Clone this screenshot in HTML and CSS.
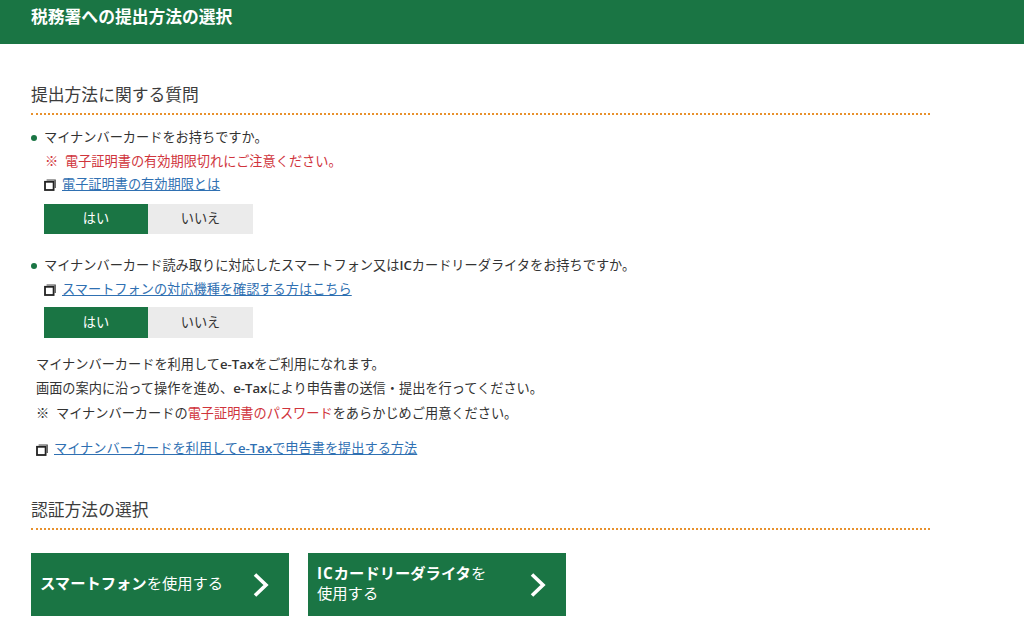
FILE: index.html
```html
<!DOCTYPE html>
<html lang="ja">
<head>
<meta charset="utf-8">
<title>税務署への提出方法の選択</title>
<link rel="stylesheet" href="styles.css">
</head>
<body>
<svg class="defs" width="0" height="0" aria-hidden="true">
  <symbol id="win" viewBox="0 0 12 12">
    <path d="M2.6 1h8.6v8" fill="none" stroke="#444" stroke-width="1.2"/>
    <rect x="1" y="2.8" width="8.6" height="8.2" fill="none" stroke="#222" stroke-width="1.8"/>
  </symbol>
  <symbol id="chev" viewBox="0 0 18 26">
    <path d="M3 2.5 14 13 3 23.5" fill="none" stroke="#fff" stroke-width="3.6"/>
  </symbol>
</svg>
<header class="page-header"><h1>税務署への提出方法の選択</h1></header>
<main class="content">
  <h2 class="section-title first">提出方法に関する質問</h2>
  <section class="question q1">
    <p class="q-label">マイナンバーカードをお持ちですか。</p>
    <p class="note"><span class="mark">※</span>電子証明書の有効期限切れにご注意ください。</p>
    <p class="link-row"><svg class="win"><use href="#win"/></svg><a href="#">電子証明書の有効期限とは</a></p>
    <div class="choice"><span class="yes">はい</span><span class="no">いいえ</span></div>
  </section>
  <section class="question q2">
    <p class="q-label">マイナンバーカード読み取りに対応したスマートフォン又は<span class="latin">IC</span>カードリーダライタをお持ちですか。</p>
    <p class="link-row"><svg class="win"><use href="#win"/></svg><a href="#">スマートフォンの対応機種を確認する方はこちら</a></p>
    <div class="choice"><span class="yes">はい</span><span class="no">いいえ</span></div>
  </section>
  <section class="info">
    <p>マイナンバーカードを利用して<span class="latin">e-Tax</span>をご利用になれます。</p>
    <p>画面の案内に沿って操作を進め、<span class="latin">e-Tax</span>により申告書の送信・提出を行ってください。</p>
    <p><span class="mark">※</span>マイナンバーカードの<em>電子証明書のパスワード</em>をあらかじめご用意ください。</p>
  </section>
  <p class="link-row howto"><svg class="win"><use href="#win"/></svg><a href="#">マイナンバーカードを利用して<span class="latin">e-Tax</span>で申告書を提出する方法</a></p>
  <h2 class="section-title">認証方法の選択</h2>
  <div class="actions">
    <a class="action" href="#"><span class="action-text"><b>スマートフォン</b>を使用する</span><svg class="chev"><use href="#chev"/></svg></a>
    <a class="action" href="#"><span class="action-text"><b><span class="latin strong">IC</span>カードリーダライタ</b>を<br>使用する</span><svg class="chev"><use href="#chev"/></svg></a>
  </div>
</main>
</body>
</html>
```
FILE: styles.css
```css
* { box-sizing: border-box; }
html, body { margin: 0; padding: 0; }
body {
  background: #fff;
  color: #333;
  font-family: "Noto Sans CJK JP", "Noto Sans", sans-serif;
  font-size: 13.2px;
  line-height: 23.6px;
  overflow: hidden;
  height: 629px;
}
p, h1, h2 { margin: 0; font-weight: normal; }
.defs { position: absolute; }
.latin { font-family: "Open Sans", "Noto Sans", sans-serif; font-weight: 600; }
.latin.strong { font-weight: 700; letter-spacing: 1px; }
.page-header {
  height: 44px;
  background: #1a7544;
  padding: 4px 0 0 31px;
}
.page-header h1 {
  color: #fff;
  font-size: 16.8px;
  font-weight: 700;
  line-height: 24px;
}
.content { width: 930px; padding-left: 31px; }
.section-title {
  font-size: 16.8px;
  line-height: 28px;
  padding-bottom: 5px;
  border-bottom: 2px dotted #e8912d;
  color: #3c3c3c;
}
.section-title.first { margin-top: 36px; }
.question { padding-left: 13px; }
.q1 { margin-top: 10px; }
.q2 { margin-top: 19px; }
.q-label { position: relative; }
.q-label::before {
  content: "";
  position: absolute;
  left: -13px;
  top: 10px;
  width: 6px;
  height: 6px;
  border-radius: 50%;
  background: #1a7544;
}
.note { color: #d0343c; padding-left: 1px; }
.mark { display: inline-block; width: 20px; }
.link-row { display: flex; align-items: center; }
.win { width: 12px; height: 12px; margin-right: 6px; flex: none; position: relative; top: 1px; }
a { color: #2f70b2; }
.choice { display: flex; margin-top: 8px; height: 30px; }
.q2 .choice { margin-top: 6px; height: 31px; }
.choice span { width: 104px; display: flex; align-items: center; justify-content: center; padding-bottom: 2px; }
.choice .yes { background: #1a7544; color: #fff; }
.choice .no { background: #ebebeb; width: 105px; }
.info { margin-top: 14px; padding-left: 5px; line-height: 23.5px; }
.info em { font-style: normal; color: #d0343c; }
.howto { margin-top: 12px; padding-left: 5px; }
.howto + .section-title { margin-top: 34px; }
.actions { display: flex; gap: 19px; margin-top: 23px; }
.action {
  width: 258px;
  height: 63px;
  background: #1a7544;
  color: #fff;
  text-decoration: none;
  display: flex;
  align-items: center;
  justify-content: space-between;
  padding: 0 19px 0 9px;
  font-size: 15.3px;
  line-height: 19.5px;
}
.action-text { margin-bottom: 4px; }
.action b { font-weight: 700; }
.chev { width: 18px; height: 26px; flex: none; }
```
